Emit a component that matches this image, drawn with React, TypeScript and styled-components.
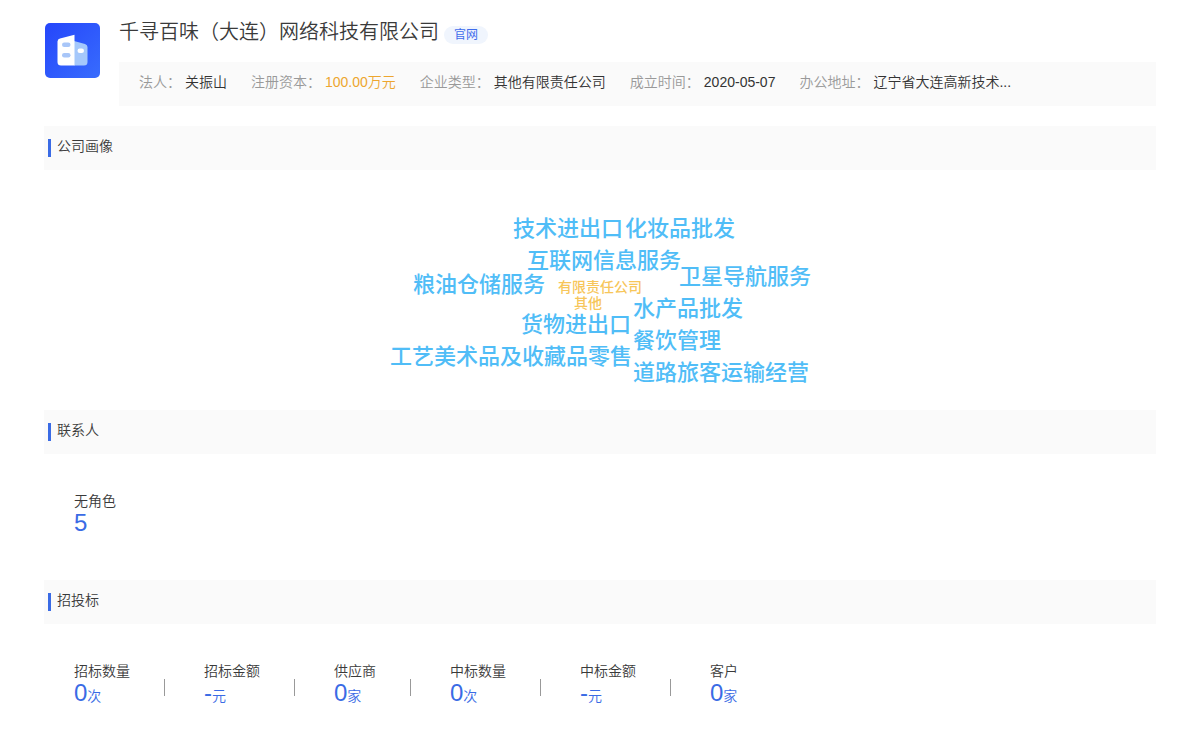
import React from "react";
import styled, { createGlobalStyle } from "styled-components";

const GlobalStyle = createGlobalStyle`
  *, *::before, *::after { box-sizing: border-box; }
  body {
    margin: 0;
    background: #fff;
    color: #3a3a3a;
    font-family: "Liberation Sans", "Noto Sans CJK SC", sans-serif;
    font-size: 14px;
    font-weight: 350;
    line-height: 20px;
  }
  h1, h2, dl, dd, ul { margin: 0; padding: 0; font-weight: inherit; }
`;

const Page = styled.main`
  padding: 20px 44px 0;
`;

const Header = styled.header`
  display: flex;
  align-items: flex-start;
  gap: 19px;
  margin-bottom: 20px;
`;

const Logo = styled.svg`
  flex: none;
  width: 56px;
  height: 56px;
  margin-top: 2px;
`;

const HeaderBody = styled.div`
  flex: 1;
  min-width: 0;
`;

const TitleRow = styled.div`
  display: flex;
  align-items: center;
  gap: 5px;
  height: 42px;
  padding-bottom: 18px;
`;

const Title = styled.h1`
  font-size: 20px;
  line-height: 24px;
`;

const SiteLink = styled.a`
  margin-top: 6px;
  padding: 0 10px;
  border-radius: 9px;
  background: #f0f5fd;
  color: #3f6cec;
  font-size: 12px;
  font-weight: 400;
  line-height: 18px;
  text-decoration: none;
`;

const InfoBar = styled.dl`
  display: flex;
  flex-wrap: wrap;
  column-gap: 24px;
  padding: 10px 20px 14px;
  background: #fafafa;
`;

const InfoItem = styled.div`
  display: flex;
  gap: 4px;
`;

const InfoLabel = styled.dt`
  color: #999;
`;

const InfoValue = styled.dd<{ $highlight?: boolean }>`
  color: ${(p) => (p.$highlight ? "#eda62f" : "#333")};
`;

const SectionTitle = styled.h2`
  display: flex;
  align-items: flex-start;
  gap: 6px;
  height: 44px;
  padding: 10px 4px;
  background: #fafafa;
  font-size: 14px;

  &::before {
    content: "";
    width: 3px;
    height: 18px;
    margin-top: 3px;
    background: #3a6be5;
  }
`;

const Cloud = styled.ul`
  position: relative;
  width: 440px;
  height: 240px;
  margin: 0 auto;
  list-style: none;
`;

const Word = styled.li<{ $x: number; $y: number; $minor?: boolean }>`
  position: absolute;
  left: ${(p) => p.$x}px;
  top: ${(p) => p.$y}px;
  color: ${(p) => (p.$minor ? "#f7c65a" : "#50bdf7")};
  font-size: ${(p) => (p.$minor ? 14 : 22)}px;
  font-weight: 500;
  line-height: ${(p) => (p.$minor ? 16 : 32)}px;
  white-space: nowrap;
`;

const Stats = styled.dl`
  display: flex;
  flex-wrap: wrap;
  padding: 36px 30px 44px;
`;

const Stat = styled.div`
  display: flex;
  flex-direction: column;
  position: relative;

  & + & {
    margin-left: 34px;
    padding-left: 40px;
  }

  & + &::before {
    content: "";
    position: absolute;
    left: 0;
    top: 19px;
    width: 1px;
    height: 17px;
    background: #999;
  }
`;

const StatLabel = styled.dt`
  line-height: 22px;
`;

const StatValue = styled.dd`
  padding-bottom: 2px;
  color: #3a6be5;
  font-size: 24px;
  line-height: 22px;
`;

const Unit = styled.span`
  font-size: 14px;
`;

const info = [
  { label: "法人", value: "关振山" },
  { label: "注册资本", value: "100.00万元", highlight: true },
  { label: "企业类型", value: "其他有限责任公司" },
  { label: "成立时间", value: "2020-05-07" },
  { label: "办公地址", value: "辽宁省大连高新技术..." },
];

const words = [
  { text: "技术进出口", x: 133, y: 43 },
  { text: "化妆品批发", x: 245, y: 43 },
  { text: "互联网信息服务", x: 147, y: 75 },
  { text: "卫星导航服务", x: 299, y: 91 },
  { text: "粮油仓储服务", x: 33, y: 99 },
  { text: "有限责任公司", x: 178, y: 109, minor: true },
  { text: "其他", x: 194, y: 125, minor: true },
  { text: "水产品批发", x: 253, y: 123 },
  { text: "货物进出口", x: 141, y: 139 },
  { text: "餐饮管理", x: 253, y: 155 },
  { text: "工艺美术品及收藏品零售", x: 10, y: 171 },
  { text: "道路旅客运输经营", x: 253, y: 187 },
];

type StatData = { label: string; value: string; unit?: string };

const contacts: StatData[] = [{ label: "无角色", value: "5" }];

const bids: StatData[] = [
  { label: "招标数量", value: "0", unit: "次" },
  { label: "招标金额", value: "-", unit: "元" },
  { label: "供应商", value: "0", unit: "家" },
  { label: "中标数量", value: "0", unit: "次" },
  { label: "中标金额", value: "-", unit: "元" },
  { label: "客户", value: "0", unit: "家" },
];

function StatList({ items }: { items: StatData[] }) {
  return (
    <Stats>
      {items.map((s) => (
        <Stat key={s.label}>
          <StatLabel>{s.label}</StatLabel>
          <StatValue>
            {s.value}
            {s.unit && <Unit>{s.unit}</Unit>}
          </StatValue>
        </Stat>
      ))}
    </Stats>
  );
}

export default function App() {
  return (
    <>
      <GlobalStyle />
      <Page>
        <Header>
          <Logo viewBox="0 0 56 56" aria-hidden="true">
            <defs>
              <linearGradient id="tile" x1="0" y1="0" x2="1" y2="1">
                <stop offset="0" stopColor="#2546fb" />
                <stop offset="1" stopColor="#386cfd" />
              </linearGradient>
            </defs>
            <rect x="1" y="1" width="55" height="55" rx="5" fill="url(#tile)" />
            <path d="M30 19 L41 22 Q43.500 23 43.500 25 V40 Q43.500 43.500 40 43.500 H30 Z" fill="#a5c8fb" />
            <path d="M16 16.500 L30.500 12.800 V43.500 H17 Q13.500 43.500 13.500 40 V19.500 Q13.500 17.200 16 16.500 Z" fill="#fff" />
            <rect x="18" y="20.500" width="8.500" height="4.500" rx="2.200" fill="#a8c6f8" />
            <rect x="18" y="31" width="8.500" height="4.500" rx="2.200" fill="#a8c6f8" />
            <rect x="33.500" y="26.500" width="6.500" height="4.500" rx="2.200" fill="#fff" />
          </Logo>
          <HeaderBody>
            <TitleRow>
              <Title>千寻百味（大连）网络科技有限公司</Title>
              <SiteLink href="#">官网</SiteLink>
            </TitleRow>
            <InfoBar>
              {info.map((i) => (
                <InfoItem key={i.label}>
                  <InfoLabel>{i.label}：</InfoLabel>
                  <InfoValue $highlight={i.highlight}>{i.value}</InfoValue>
                </InfoItem>
              ))}
            </InfoBar>
          </HeaderBody>
        </Header>

        <section>
          <SectionTitle>公司画像</SectionTitle>
          <Cloud>
            {words.map((w) => (
              <Word key={w.text} $x={w.x} $y={w.y} $minor={w.minor}>
                {w.text}
              </Word>
            ))}
          </Cloud>
        </section>

        <section>
          <SectionTitle>联系人</SectionTitle>
          <StatList items={contacts} />
        </section>

        <section>
          <SectionTitle>招投标</SectionTitle>
          <StatList items={bids} />
        </section>
      </Page>
    </>
  );
}
